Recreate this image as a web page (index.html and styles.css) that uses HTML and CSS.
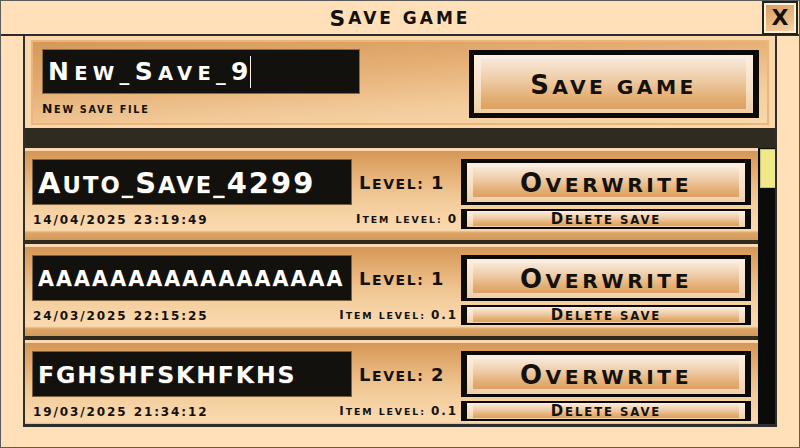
FILE: index.html
```html
<!DOCTYPE html>
<html lang="en">
<head>
<meta charset="utf-8">
<title>Save game</title>
<link rel="stylesheet" href="styles.css">
</head>
<body>
<div class="window">
  <header class="titlebar">
    <div class="spacer"></div>
    <h1 class="title"><span class="k">S</span>ave game</h1>
    <button class="close">X</button>
  </header>
  <main class="panel">
    <section class="top">
      <div class="top-inner">
        <div class="new-save">
          <div class="input"><span class="input-text"><span class="k">N</span>ew_<span class="k">S</span>ave_<span class="k">9</span></span><span class="caret"></span></div>
          <div class="input-label"><span class="k">N</span>ew save file</div>
        </div>
        <button class="btn btn-save"><span class="face"><span class="txt"><span class="k">S</span>ave game</span></span></button>
      </div>
    </section>
    <div class="divider"></div>
    <div class="list-wrap">
      <div class="list">
        <div class="row">
          <div class="line1">
            <div class="name name-a"><span class="txt"><span class="k">A</span>uto_<span class="k">S</span>ave_<span class="k">4299</span></span></div>
            <div class="level"><span class="txt"><span class="k">L</span>evel: <span class="k">1</span></span></div>
            <button class="btn btn-over"><span class="face"><span class="txt"><span class="k">O</span>verwrite</span></span></button>
          </div>
          <div class="line2">
            <div class="date">14/04/2025 23:19:49</div>
            <div class="ilevel"><span class="k">I</span>tem level: <span class="k">0</span></div>
            <button class="btn btn-del"><span class="face"><span class="txt"><span class="k">D</span>elete save</span></span></button>
          </div>
        </div>
        <div class="row">
          <div class="line1">
            <div class="name name-b"><span class="txt">aaaaaaaaaaaaaaaaa</span></div>
            <div class="level"><span class="txt"><span class="k">L</span>evel: <span class="k">1</span></span></div>
            <button class="btn btn-over"><span class="face"><span class="txt"><span class="k">O</span>verwrite</span></span></button>
          </div>
          <div class="line2">
            <div class="date">24/03/2025 22:15:25</div>
            <div class="ilevel"><span class="k">I</span>tem level: <span class="k">0.1</span></div>
            <button class="btn btn-del"><span class="face"><span class="txt"><span class="k">D</span>elete save</span></span></button>
          </div>
        </div>
        <div class="row">
          <div class="line1">
            <div class="name name-c"><span class="txt"><span class="k">FGHSHFSKHFKHS</span></span></div>
            <div class="level"><span class="txt"><span class="k">L</span>evel: <span class="k">2</span></span></div>
            <button class="btn btn-over"><span class="face"><span class="txt"><span class="k">O</span>verwrite</span></span></button>
          </div>
          <div class="line2">
            <div class="date">19/03/2025 21:34:12</div>
            <div class="ilevel"><span class="k">I</span>tem level: <span class="k">0.1</span></div>
            <button class="btn btn-del"><span class="face"><span class="txt"><span class="k">D</span>elete save</span></span></button>
          </div>
        </div>
      </div>
      <div class="scrollbar"><div class="thumb"></div></div>
    </div>
  </main>
</div>
</body>
</html>
```

FILE: styles.css
```css
* { box-sizing: border-box; }
html, body { margin: 0; padding: 0; }
body {
  width: 800px;
  height: 448px;
  overflow: hidden;
  font-family: "DejaVu Sans", "Liberation Sans", sans-serif;
  font-weight: bold;
  color: #14110c;
}
button { font: inherit; color: inherit; margin: 0; cursor: pointer; }

.window {
  width: 800px;
  height: 448px;
  border: 1px solid #5c5c5c;
  background: #ffe0b9;
}

.k { font-size: 1.28em; }
.txt { white-space: pre; }

.titlebar {
  height: 35px;
  border-bottom: 2px solid #2b2b2b;
  display: grid;
  grid-template-columns: 37px 1fr 37px;
  align-items: start;
}
.title {
  margin: 0;
  height: 33px;
  display: flex;
  align-items: center;
  justify-content: center;
  font-size: 17px;
  letter-spacing: 3px;
  text-transform: uppercase;
  line-height: 1;
  padding-top: 2px;
  font-weight: bold;
}
.close {
  width: 36px;
  height: 34px;
  border: 2px solid #1f2519;
  box-shadow: inset 0 0 0 2px #fff0dc;
  background: linear-gradient(160deg, #d79c5c 0%, #e9b880 50%, #f8d7ad 100%);
  font-size: 22px;
  line-height: 28px;
  padding: 0;
  margin-right: 1px;
}

.panel {
  margin: 0 22px;
  height: 391px;
  border-left: 2px solid #2e2e2e;
  border-right: 2px solid #2e2e2e;
  border-bottom: 3px solid #2e2e2e;
  display: flex;
  flex-direction: column;
}

.top {
  height: 92px;
  background: #fbd8ab;
  padding: 4px 6px 3px;
}
.top-inner {
  height: 85px;
  background: linear-gradient(176deg, #d3975a 0%, #e4ad72 35%, #f3cc9c 70%, #f9d9ae 100%);
  box-shadow: inset 0 0 0 2px #eab679;
  display: flex;
  justify-content: space-between;
  padding: 9px 10px 0 11px;
}
.new-save { display: flex; flex-direction: column; }
.input {
  width: 318px;
  height: 45px;
  background: #13110d;
  border: 1px solid #8a6a44;
  display: flex;
  align-items: center;
  padding-left: 5px;
  color: #fff;
  font-size: 19.5px;
  letter-spacing: 5.3px;
  text-transform: uppercase;
  line-height: 1;
}
.input-text { padding-top: 2px; }
.caret {
  width: 1px;
  height: 32px;
  background: #f2f2f2;
  margin-left: -4px;
}
.input-label {
  margin-top: 9px;
  font-size: 9.7px;
  letter-spacing: 1.7px;
  text-transform: uppercase;
  line-height: 1;
}

.btn {
  display: block;
  border-style: solid;
  border-color: #0b0a08;
  background: linear-gradient(to bottom, #fcefe2 0%, #f6dfc4 60%, #efcfa8 100%);
  text-transform: uppercase;
  line-height: 1;
}
.face {
  display: flex;
  align-items: center;
  justify-content: center;
  height: 100%;
  width: 100%;
  background: linear-gradient(to bottom, #f8e8d8 0%, #efcda8 40%, #e2ac70 80%, #dca164 100%);
}
.btn-save {
  width: 290px;
  height: 68px;
  border-width: 5px 6px 5px 5px;
  padding: 4px 7px;
  margin-top: 1px;
  font-size: 20.3px;
  letter-spacing: 3.4px;
}
.btn-save .face { padding-top: 2px; }

.divider {
  height: 20px;
  background: #302b21;
  flex: none;
}

.list-wrap {
  height: 276px;
  display: flex;
  overflow: hidden;
}
.list {
  width: 733px;
  flex: none;
}
.scrollbar {
  width: 19px;
  flex: none;
  background: #0b0b0a;
  padding: 1px 1px 0 2px;
}
.thumb {
  height: 39px;
  background: #f0e98a;
  border: 1px solid #c8c07a;
}

.row {
  height: 96px;
  border-top: 3px solid #fcdab0;
  border-bottom: 4px solid #2f2b21;
  padding: 8px 7px 0;
  background: linear-gradient(to bottom, #d49856 0%, #e4af74 25%, #f0c895 50%, #f8d6aa 78%, #fad9ae 89%, #dca466 92%, #d39a5a 100%);
}
.line1 { display: flex; height: 46px; }
.name {
  width: 320px;
  flex: none;
  height: 46px;
  background: #13110d;
  border: 1px solid #7b6040;
  color: #fff;
  display: flex;
  align-items: center;
  padding-left: 5px;
  text-transform: uppercase;
  line-height: 1;
  white-space: nowrap;
  overflow: hidden;
  text-shadow: 0 1px 0 #3a3128;
}
.name-a { font-size: 22.6px; letter-spacing: 2.1px; padding-top: 3px; }
.name-b { font-size: 20.6px; letter-spacing: 2.1px; padding-top: 3px; }
.name-c { font-size: 18.5px; letter-spacing: 1.8px; padding-top: 3px; }

.level {
  flex: 1;
  display: flex;
  align-items: center;
  padding-left: 7px;
  padding-top: 2px;
  font-size: 14px;
  letter-spacing: 1.6px;
  text-transform: uppercase;
  line-height: 1;
  white-space: nowrap;
}
.btn-over {
  width: 290px;
  height: 46px;
  flex: none;
  border-width: 4px 6px 3px;
  padding: 4px 6px 5px;
  font-size: 20.3px;
  letter-spacing: 3.5px;
}
.btn-over .face { padding-top: 2px; }

.line2 {
  display: flex;
  align-items: center;
  height: 20px;
  margin-top: 4px;
}
.date {
  flex: 1;
  font-size: 12px;
  letter-spacing: 1.9px;
  padding-left: 1px;
  line-height: 1;
  white-space: nowrap;
  padding-top: 1px;
}
.ilevel {
  font-size: 9.4px;
  letter-spacing: 1.9px;
  text-transform: uppercase;
  line-height: 1;
  white-space: nowrap;
  padding-right: 3px;
  padding-top: 1px;
}
.btn-del {
  width: 290px;
  height: 20px;
  flex: none;
  border-width: 2px 6px;
  padding: 1px 6px;
  font-size: 11.7px;
  letter-spacing: 1.9px;
}
.btn-del .face { padding-top: 1px; }
```
